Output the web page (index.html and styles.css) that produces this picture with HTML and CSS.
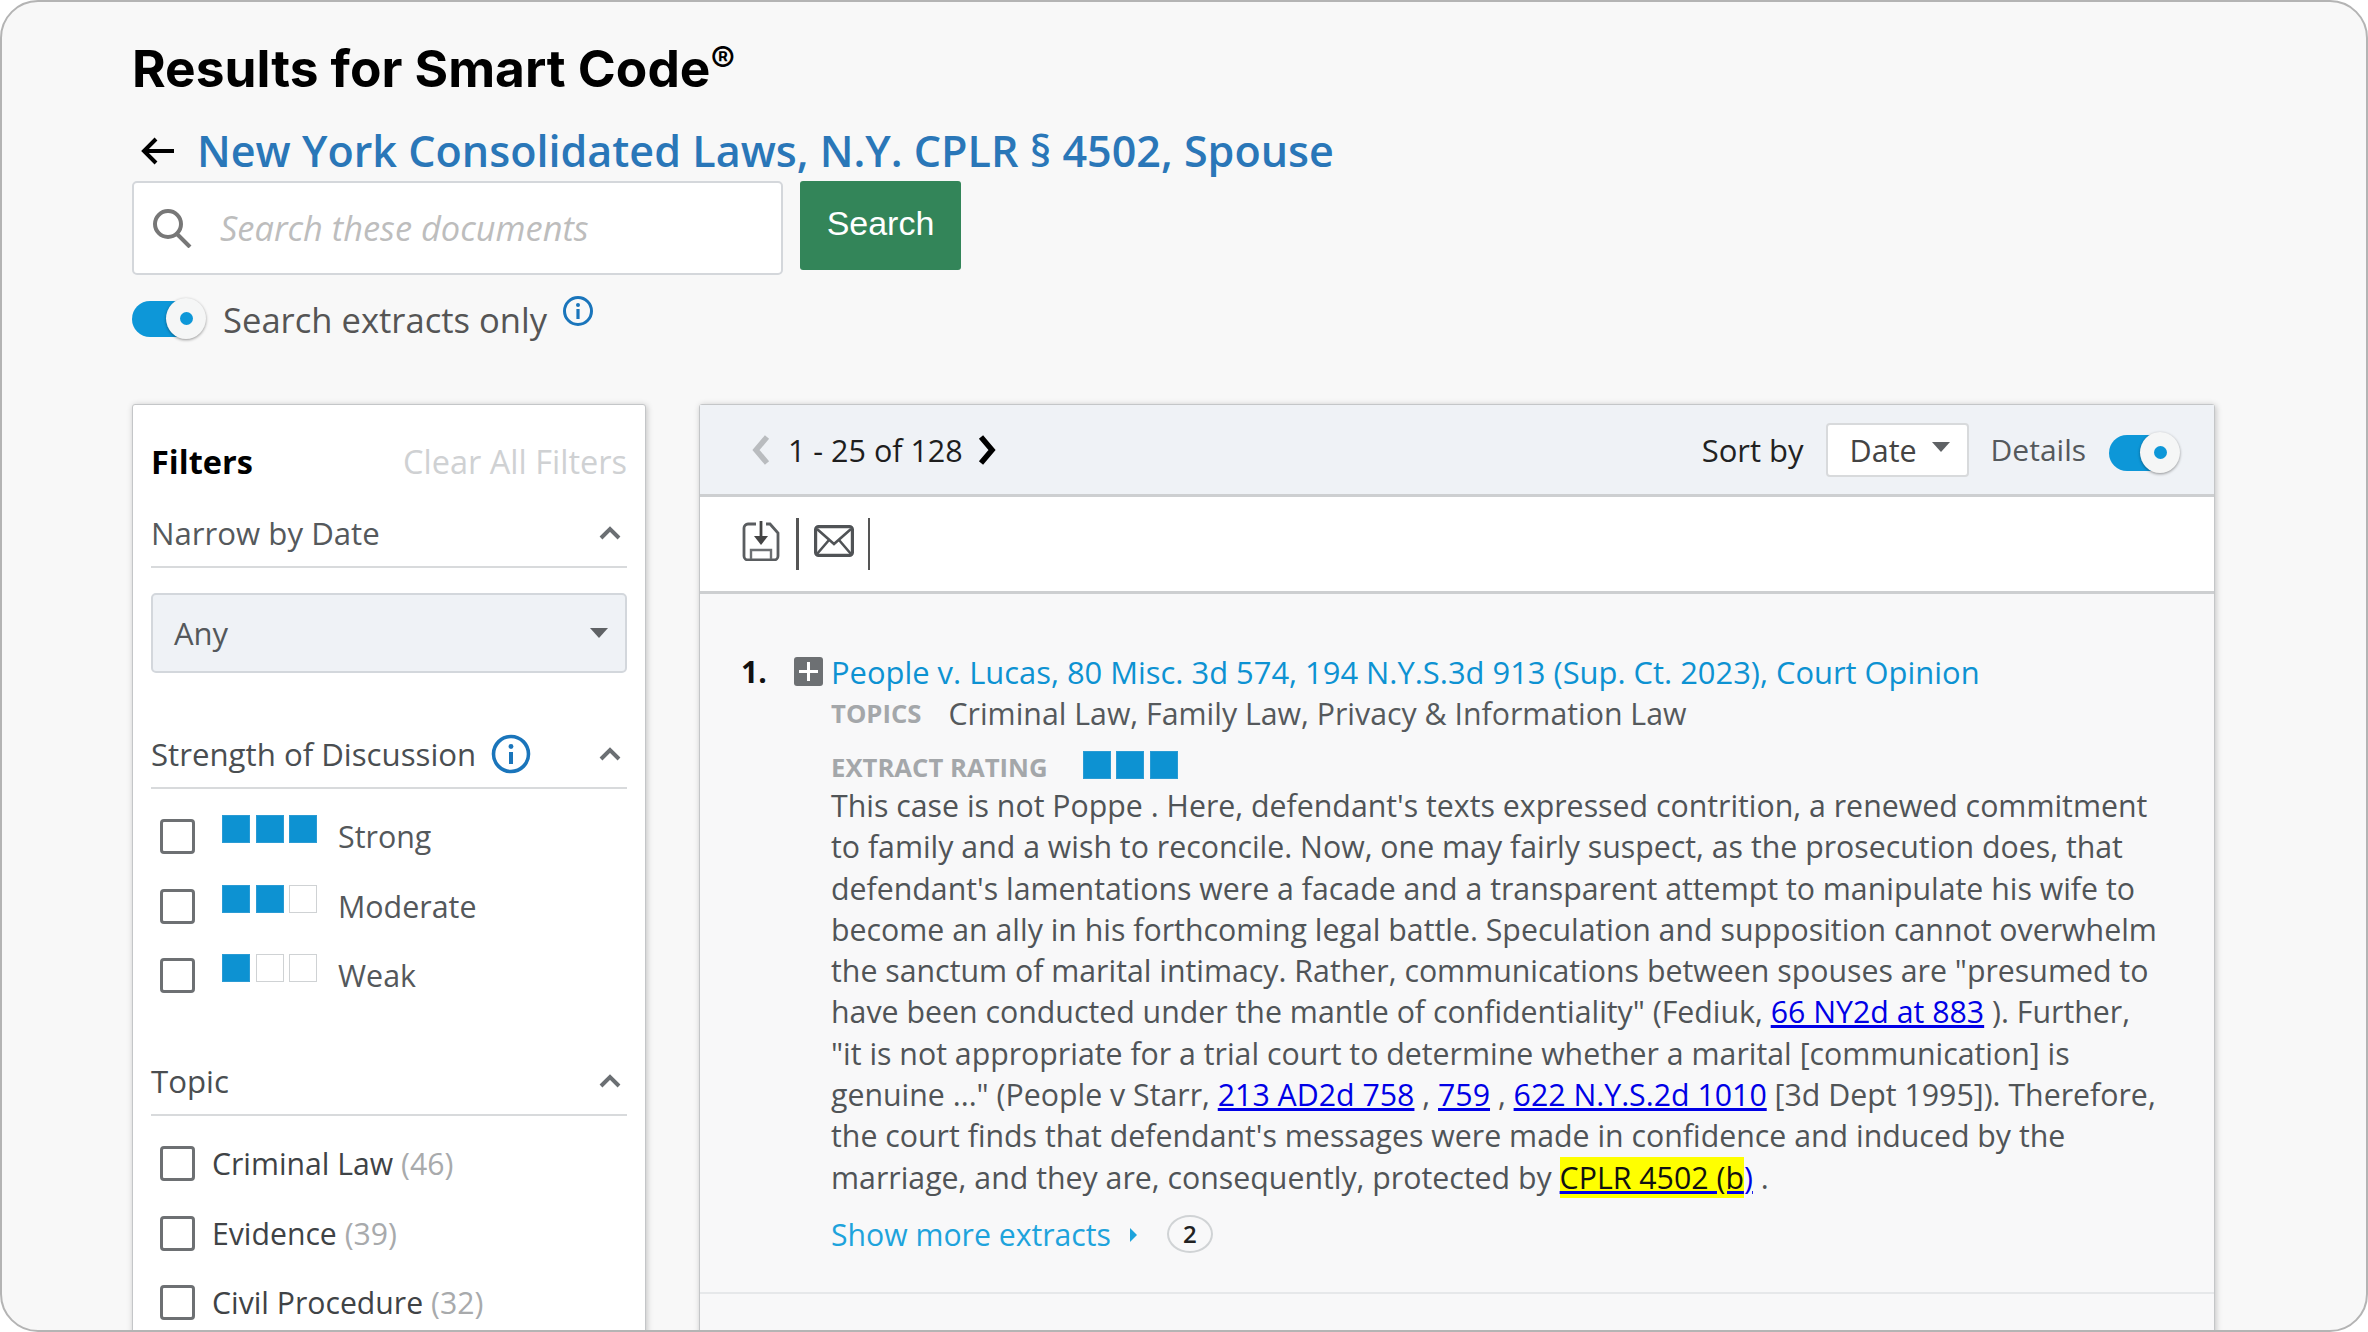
FILE: index.html
```html
<!DOCTYPE html>
<html lang="en">
<head>
<meta charset="utf-8">
<title>Results for Smart Code</title>
<link rel="stylesheet" href="styles.css">
</head>
<body>
<div class="frame">
  <h1 class="page-title">Results for Smart Code<sup class="reg">®</sup></h1>
  <div class="back-row">
    <svg class="back-icon" viewBox="0 0 36 30"><path d="M34 15H4M16 3 4 15l12 12" fill="none" stroke="#000" stroke-width="4"/></svg>
    <a class="back-link">New York Consolidated Laws, N.Y. CPLR § 4502, Spouse</a>
  </div>
  <div class="search-row">
    <div class="search-box">
      <svg class="search-icon" viewBox="0 0 40 40"><circle cx="16" cy="16" r="13" fill="none" stroke="#777" stroke-width="4"/><path d="M25 26 38 39" stroke="#777" stroke-width="4" fill="none"/></svg>
      <span class="search-ph">Search these documents</span>
    </div>
    <button class="search-btn">Search</button>
  </div>
  <div class="extract-row">
    <span class="toggle"><span class="knob"><span class="dot"></span></span></span>
    <span class="extract-label">Search extracts only</span>
    <svg class="info info-small" viewBox="0 0 32 32"><circle cx="16" cy="16" r="13.5" fill="none" stroke="#1a75bb" stroke-width="3"/><circle cx="16" cy="10" r="2" fill="#1a75bb"/><path d="M16 14v10" stroke="#1a75bb" stroke-width="3.2"/></svg>
  </div>

  <div class="columns">
    <aside class="filters">
      <div class="filters-head"><strong>Filters</strong><span class="clear">Clear All Filters</span></div>

      <div class="section-head date-head"><span>Narrow by Date</span>
        <svg class="chev" viewBox="0 0 22 14"><path d="M2 12 11 3l9 9" fill="none" stroke="#6b6f73" stroke-width="4"/></svg></div>
      <div class="any-select"><span>Any</span><i class="caret"></i></div>

      <div class="section-head strength-head"><span class="sh-title">Strength of Discussion
        <svg class="info info-big" viewBox="0 0 40 40"><circle cx="20" cy="20" r="17.5" fill="none" stroke="#1a75bb" stroke-width="3.6"/><circle cx="20" cy="12.5" r="2.4" fill="#1a75bb"/><path d="M20 18v12" stroke="#1a75bb" stroke-width="4"/></svg></span>
        <svg class="chev" viewBox="0 0 22 14"><path d="M2 12 11 3l9 9" fill="none" stroke="#6b6f73" stroke-width="4"/></svg></div>
      <ul class="strength-list">
        <li><i class="cb"></i><span class="bars"><i class="on"></i><i class="on"></i><i class="on"></i></span><span>Strong</span></li>
        <li><i class="cb"></i><span class="bars"><i class="on"></i><i class="on"></i><i></i></span><span>Moderate</span></li>
        <li><i class="cb"></i><span class="bars"><i class="on"></i><i></i><i></i></span><span>Weak</span></li>
      </ul>

      <div class="section-head topic-head"><span>Topic</span>
        <svg class="chev" viewBox="0 0 22 14"><path d="M2 12 11 3l9 9" fill="none" stroke="#6b6f73" stroke-width="4"/></svg></div>
      <ul class="topic-list">
        <li><i class="cb"></i><span>Criminal Law <em>(46)</em></span></li>
        <li><i class="cb"></i><span>Evidence <em>(39)</em></span></li>
        <li><i class="cb"></i><span>Civil Procedure <em>(32)</em></span></li>
      </ul>
    </aside>

    <main class="results">
      <div class="res-head">
        <svg class="page-chev" viewBox="0 0 20 30"><path d="M16 2 5 15l11 13" fill="none" stroke="#b9bcbf" stroke-width="5.5"/></svg>
        <span class="page-count">1 - 25 of 128</span>
        <svg class="page-chev" viewBox="0 0 20 30"><path d="M4 2l11 13L4 28" fill="none" stroke="#000" stroke-width="5.5"/></svg>
        <span class="spacer"></span>
        <span class="sort-label">Sort by</span>
        <div class="sort-select"><span>Date</span><i class="caret caret-sm"></i></div>
        <span class="details-label">Details</span>
        <span class="toggle toggle-sm"><span class="knob"><span class="dot"></span></span></span>
      </div>
      <div class="toolbar">
        <svg class="tool-save" viewBox="0 0 38 40"><path d="M14 3H6a4 4 0 0 0-4 4v28a4 4 0 0 0 4 4h26a4 4 0 0 0 4-4V12l-8-9h-4" fill="none" stroke="#5a5d60" stroke-width="2.8"/><path d="M19 0v18" stroke="#444" stroke-width="2.8" fill="none"/><path d="M12 15h14l-7 9z" fill="#444"/><path d="M9 38V29h20v9" fill="none" stroke="#6d7073" stroke-width="2.4"/></svg>
        <i class="tool-div thick"></i>
        <svg class="tool-mail" viewBox="0 0 40 32"><rect x="1.6" y="1.6" width="36.8" height="28.8" rx="3" fill="none" stroke="#505356" stroke-width="3.2"/><path d="M3 4l17 15L37 4M3 29l12-14M37 29 25 15" fill="none" stroke="#505356" stroke-width="2.6"/></svg>
        <i class="tool-div"></i>
      </div>
      <article class="result">
        <div class="r-num">1.</div>
        <svg class="r-plus" viewBox="0 0 29 29"><rect width="29" height="29" rx="3" fill="#6d7073"/><path d="M14.5 5v19M5 14.5h19" stroke="#fff" stroke-width="3"/></svg>
        <div class="r-body">
          <a class="r-title">People v. Lucas, 80 Misc. 3d 574, 194 N.Y.S.3d 913 (Sup. Ct. 2023), Court Opinion</a>
          <div class="r-topics"><span class="tag">TOPICS</span><span>Criminal Law, Family Law, Privacy &amp; Information Law</span></div>
          <div class="r-rating"><span class="tag">EXTRACT RATING</span><span class="bars"><i class="on"></i><i class="on"></i><i class="on"></i></span></div>
          <p class="r-text">This case is not Poppe . Here, defendant's texts expressed contrition, a renewed commitment<br>to family and a wish to reconcile. Now, one may fairly suspect, as the prosecution does, that<br>defendant's lamentations were a facade and a transparent attempt to manipulate his wife to<br>become an ally in his forthcoming legal battle. Speculation and supposition cannot overwhelm<br>the sanctum of marital intimacy. Rather, communications between spouses are "presumed to<br>have been conducted under the mantle of confidentiality" (Fediuk, <a class="cite">66 NY2d at 883</a> ). Further,<br>"it is not appropriate for a trial court to determine whether a marital [communication] is<br>genuine ..." (People v Starr, <a class="cite">213 AD2d 758</a> , <a class="cite">759</a> , <a class="cite">622 N.Y.S.2d 1010</a> [3d Dept 1995]). Therefore,<br>the court finds that defendant's messages were made in confidence and induced by the<br>marriage, and they are, consequently, protected by <a class="cite"><mark>CPLR 4502 (b</mark>)</a> .</p>
          <div class="r-more"><a class="more-link">Show more extracts</a><i class="more-caret"></i><span class="badge">2</span></div>
        </div>
      </article>
      <div class="r-sep"></div>
    </main>
  </div>
</div>
</body>
</html>
```
FILE: styles.css
```css
* { box-sizing: border-box; }
html, body { margin: 0; background: #fff; }
body { width: 2368px; height: 1332px; overflow: hidden; font-family: "Open Sans", sans-serif; }
ul { list-style: none; margin: 0; padding: 0; }
i, em { font-style: normal; }
.frame {
  width: 2368px; height: 1332px; border: 2px solid #b4b4b4; border-radius: 38px;
  background: #f8f8f8; overflow: hidden; padding: 0 0 0 130px;
}
.page-title { margin: 0; padding-top: 37px; height: 96px; font: 700 51.4px/58px Inter, sans-serif; color: #000; letter-spacing: 0; white-space: nowrap; }
.reg { font-size: 37px; font-weight: 500; line-height: 0; vertical-align: 14px; }
.back-row { display: flex; align-items: center; height: 60px; padding-left: 8px; margin-top: 23px; }
.back-icon { width: 36px; height: 30px; margin-right: 21px; }
.back-link { font-size: 43.1px; font-weight: 600; color: #2a77b8; white-space: nowrap; line-height: 50px; }
.search-row { display: flex; align-items: flex-start; gap: 17px; }
.search-box { width: 651px; height: 94px; background: #fff; border: 2px solid #d4d7db; border-radius: 5px; display: flex; align-items: center; padding: 0 0 2px 18px; }
.search-icon { width: 40px; height: 40px; margin: 2px 28px 0 0; }
.search-ph { font-size: 34.4px; font-style: italic; color: #bdbdbd; }
.search-btn { width: 161px; height: 89px; border: 0; border-radius: 3px; background: #338559; color: #fff; font: 34px "Liberation Sans", sans-serif; padding: 0 0 4px; }
.extract-row { display: flex; align-items: center; height: 42px; margin-top: 23px; position: relative; }
.toggle { position: relative; display: block; width: 74px; height: 38px; flex: none; }
.toggle::before { content: ""; position: absolute; left: 0; right: 10px; top: 1px; height: 36px; background: #0d97d8; border-radius: 18px; }
.knob { position: absolute; right: 0; top: -2px; width: 40px; height: 41px; border-radius: 50%; background: #f5f6f6; box-shadow: 0 1px 3px rgba(0,0,0,.4); display: flex; align-items: center; justify-content: center; }
.dot { width: 13px; height: 13px; border-radius: 50%; background: #0d97d8; }
.extract-label { font-size: 34.6px; color: #555; margin: 2px 0 0 17px; line-height: 42px; }
.info { display: block; flex: none; }
.info-small { width: 32px; height: 32px; margin-left: 15px; margin-top: -16px; }
.columns { display: flex; align-items: flex-start; gap: 53px; margin-top: 64px; }
.filters { width: 514px; height: 940px; background: #fff; border: 1px solid #c4c6c8; border-radius: 3px; box-shadow: 1px 1px 6px rgba(0,0,0,.22); padding: 0 18px 0 18px; flex: none; }
.filters-head { display: flex; justify-content: space-between; align-items: center; height: 60px; margin-top: 26px; }
.filters-head strong { font-size: 32.5px; font-weight: 700; color: #000; }
.clear { font-size: 32.5px; color: #cfd1d3; white-space: nowrap; }
.section-head { display: flex; align-items: center; justify-content: space-between; border-bottom: 2px solid #d8dadc; font-size: 31.2px; color: #55595c; padding-right: 6px; }
.date-head { height: 62px; margin-top: 15px; padding-bottom: 6px; }
.chev { width: 22px; height: 14px; flex: none; }
.any-select { height: 80px; margin-top: 25px; background: #eff2f6; border: 2px solid #d3d7dc; border-radius: 5px; display: flex; align-items: center; justify-content: space-between; padding: 0 17px 0 21px; font-size: 31px; color: #54585b; }
.caret { display: block; width: 0; height: 0; border-left: 9px solid transparent; border-right: 9px solid transparent; border-top: 10px solid #5f6265; }
.strength-head { height: 67px; margin-top: 49px; color: #4a4e51; padding-bottom: 2px; }
.sh-title { display: flex; align-items: center; gap: 15px; }
.info-big { width: 40px; height: 40px; }
.strength-list { margin-top: 28px; font-size: 30.4px; color: #54585b; }
.strength-list li { display: flex; align-items: center; height: 39px; margin-bottom: 30.5px; }
.cb { display: block; flex: none; width: 35px; height: 35px; border: 3.5px solid #6d7073; border-radius: 4px; background: #fff; margin-left: 9px; }
.bars { display: flex; gap: 5.5px; }
.bars i { display: block; width: 28px; height: 28px; border: 1.5px solid #cfd2d4; background: #fff; }
.bars i.on { background: #0d92d2; border-color: #2a9bd4; }
.strength-list .bars { margin: -15px 21px 0 27px; }
.topic-head { height: 69px; margin-top: 52px; color: #4a4e51; padding-bottom: 0; }
.topic-list { margin-top: 30px; font-size: 30.2px; color: #3f4346; }
.topic-list li { display: flex; align-items: center; height: 35px; margin-bottom: 34.5px; gap: 17px; white-space: nowrap; }
.topic-list em { color: #a8aaac; }
.results { width: 1516px; height: 940px; border: 1px solid #c4c6c8; border-radius: 3px; box-shadow: 1px 1px 6px rgba(0,0,0,.22); flex: none; background: #f8f8f9; }
.res-head { display: flex; align-items: center; height: 92px; background: #eff2f6; border-bottom: 3px solid #cdcfd1; padding: 0 34px 0 51px; font-size: 30.5px; }
.page-chev { width: 20px; height: 30px; flex: none; }
.page-count { color: #1e1e1e; margin: 0 14px 0 17px; white-space: nowrap; }
.spacer { flex: 1; }
.sort-label { color: #222; font-size: 31px; }
.sort-select { width: 143px; height: 54px; margin: 0 22px; background: #fff; border: 2px solid #d8dadc; border-radius: 4px; display: flex; align-items: center; justify-content: space-between; padding: 0 17px 0 22px; color: #444; }
.caret-sm { margin-top: -6px; }
.details-label { color: #55595c; margin-right: 23px; font-size: 30px; }
.toggle-sm { width: 71px; height: 38px; margin-top: 7px; }
.toolbar { display: flex; align-items: center; height: 97px; background: #fff; border-bottom: 3px solid #cdcfd1; padding-left: 42px; }
.tool-save { width: 38px; height: 40px; margin-top: -6px; }
.tool-div { display: block; width: 3px; height: 52px; background: #555; margin: 0 15px 0 16px; }
.tool-div:last-child { width: 2px; margin-left: 14px; }
.tool-mail { width: 40px; height: 32px; margin-top: -6px; }
.result { display: flex; align-items: flex-start; padding: 60px 0 0 41px; }
.r-num { width: 53px; flex: none; font-size: 30px; font-weight: 700; color: #111; line-height: 36px; }
.r-plus { width: 29px; height: 29px; flex: none; margin: 3px 8px 0 0; }
.r-body { flex: 1; }
.r-title { display: block; font-size: 30.9px; font-weight: 500; color: #0d92d2; line-height: 36px; white-space: nowrap; }
.r-topics { display: flex; gap: 27px; font-size: 30.3px; line-height: 40px; color: #55595c; margin-top: 4px; white-space: nowrap; }
.tag { font-size: 25.7px; font-weight: 700; color: #a4a7aa; white-space: nowrap; }
.r-rating { display: flex; align-items: center; gap: 35px; height: 36px; margin-top: 15px; }
.r-rating .bars { margin-top: -5px; }
.r-text { margin: 0; font-size: 30.3px; line-height: 41.3px; color: #505457; white-space: nowrap; }
.cite { color: #0000e6; text-decoration: underline; }
mark { background: #ffff00; color: #111; }
.r-more { display: flex; align-items: center; height: 40px; margin-top: 17px; }
.more-link { font-size: 30.2px; color: #1ea3dc; }
.more-caret { display: block; width: 0; height: 0; border-top: 7px solid transparent; border-bottom: 7px solid transparent; border-left: 7px solid #1ea3dc; margin: 0 30px 0 19px; }
.badge { display: flex; align-items: center; justify-content: center; width: 46px; height: 38px; margin-top: -2px; border: 2px solid #d0d3d5; border-radius: 50%; font-size: 24px; font-weight: 600; color: #222; }
.r-sep { height: 2px; background: #e6e8ea; margin-top: 37px; }
```
